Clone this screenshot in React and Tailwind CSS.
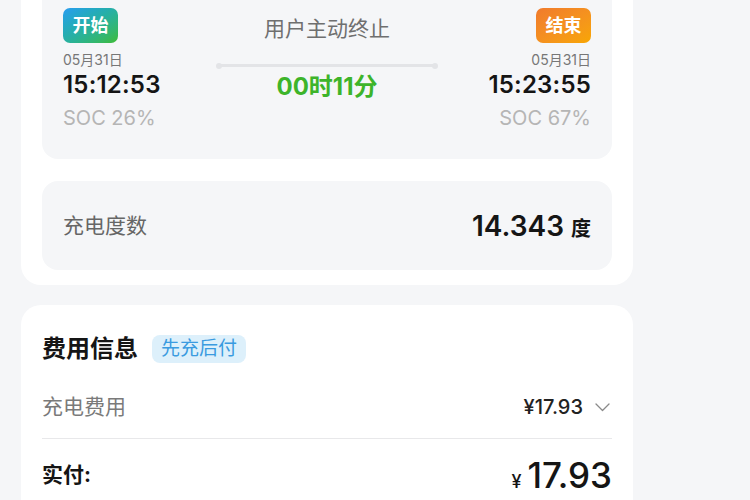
import React from "react";

const font = { fontFamily: 'Inter, "Noto Sans CJK SC", sans-serif' };

function Side({ badge, gradient, date, time, soc, align }) {
  const a = align === "right" ? "items-end" : "items-start";
  return (
    <div className={`flex flex-col ${a} w-[140px]`}>
      <div
        className={`h-[35px] w-[55px] rounded-[7px] flex items-center justify-center text-white text-[18px] font-bold ${gradient}`}
      >
        {badge}
      </div>
      <div className="mt-[8px] text-[14px] leading-[18px] text-[#777]">{date}</div>
      <div className="mt-[2px] text-[24px] leading-[28px] font-semibold text-[#151515] tracking-[0.2px]">{time}</div>
      <div className="mt-[7px] text-[20px] leading-[24px] text-[#b5b5b5]">{soc}</div>
    </div>
  );
}

export default function App() {
  return (
    <div className="min-h-screen bg-[#f5f6f8] overflow-hidden" style={font}>
      <div className="-mt-[40px] pl-[21px] w-[633px]">
        <div className="bg-white rounded-[20px] px-[21px] pt-[20px] pb-[15px]">
          <div className="bg-[#f5f6f8] rounded-[16px] px-[21px] pt-[28px] pb-[29px] flex justify-between">
            <Side
              badge="开始"
              gradient="bg-gradient-to-br from-[#2b9cf0] to-[#3fbb2e]"
              date="05月31日"
              time="15:12:53"
              soc="SOC 26%"
              align="left"
            />
            <div className="flex flex-col items-center">
              <div className="mt-[7px] text-[21px] leading-[28px] text-[#6f6f6f]">用户主动终止</div>
              <div className="mt-[21px] relative w-[220px] h-[3px] rounded-full bg-[#e3e4e7]">
                <span className="absolute -left-[1px] -top-[1.5px] w-[6px] h-[6px] rounded-full bg-[#e3e4e7]" />
                <span className="absolute -right-[1px] -top-[1.5px] w-[6px] h-[6px] rounded-full bg-[#e3e4e7]" />
              </div>
              <div className="mt-[5px] text-[24px] leading-[30px] font-bold text-[#3db42a]">00时11分</div>
            </div>
            <Side
              badge="结束"
              gradient="bg-gradient-to-br from-[#f07a2c] to-[#f8a600]"
              date="05月31日"
              time="15:23:55"
              soc="SOC 67%"
              align="right"
            />
          </div>
          <div className="mt-[22px] bg-[#f5f6f8] rounded-[16px] h-[89px] px-[21px] flex items-center justify-between">
            <div className="text-[21px] text-[#666]">充电度数</div>
            <div className="flex items-baseline gap-[7px]">
              <span className="text-[28px] font-semibold text-[#151515]">14.343</span>
              <span className="text-[20px] font-bold text-[#151515]">度</span>
            </div>
          </div>
        </div>

        <div className="mt-[20px] bg-white rounded-[20px] px-[21px] pt-[30px] pb-[30px]">
          <div className="flex items-center h-[28px]">
            <div className="text-[24px] font-bold text-[#151515]">费用信息</div>
            <div className="ml-[14px] h-[28px] px-[9px] rounded-[8px] bg-[#ddf0fb] text-[#3a9be0] text-[19px] flex items-center">
              先充后付
            </div>
          </div>
          <div className="mt-[28px] h-[32px] flex items-center justify-between">
            <div className="text-[21px] text-[#7a7a7a]">充电费用</div>
            <div className="flex items-center gap-[12px] pr-[2px]">
              <span className="text-[20px] text-[#222] font-medium">¥17.93</span>
              <svg width="15" height="9" viewBox="0 0 15 9" fill="none">
                <path d="M1 1l6.5 6.5L14 1" stroke="#8a8a8a" strokeWidth="1.3" strokeLinecap="round" strokeLinejoin="round" />
              </svg>
            </div>
          </div>
          <div className="mt-[15px] h-px bg-[#e8e8ea]" />
          <div className="mt-[14px] flex items-center justify-between">
            <div className="text-[21px] font-bold text-[#151515]">实付:</div>
            <div className="flex items-baseline gap-[6px] text-[#151515]">
              <span className="text-[18px] font-medium">¥</span>
              <span className="text-[35px] leading-[44px] font-medium">17.93</span>
            </div>
          </div>
        </div>
      </div>
    </div>
  );
}
